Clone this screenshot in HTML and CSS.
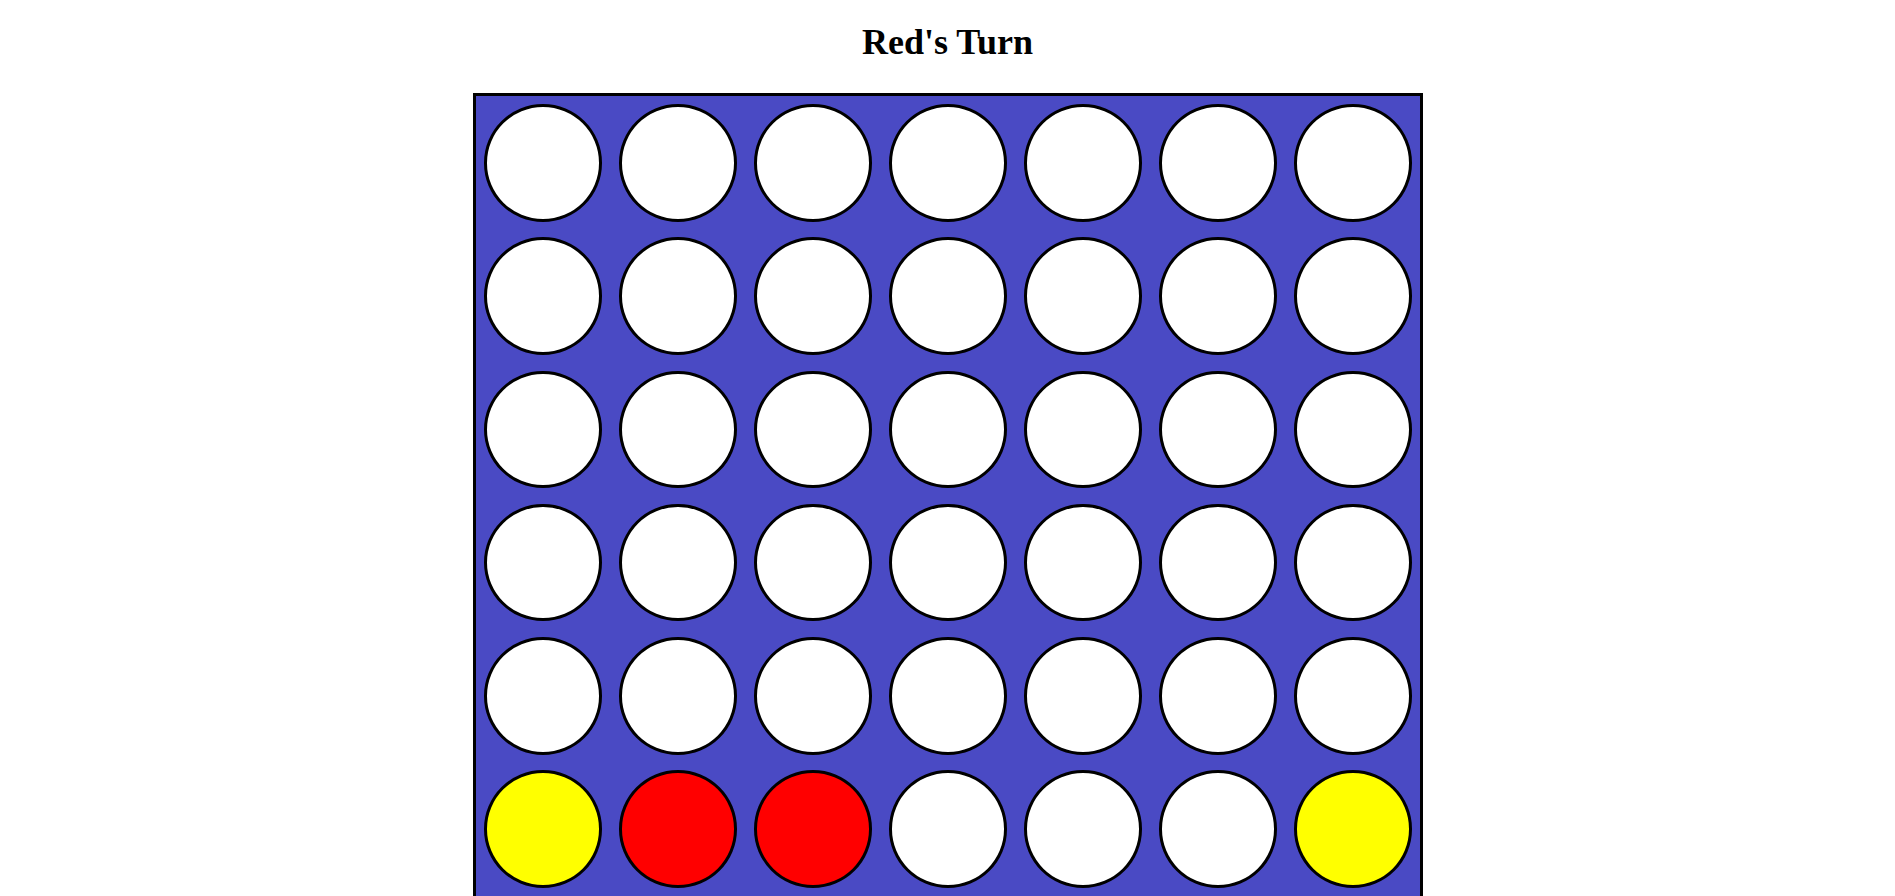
FILE: index.html
```html
<!DOCTYPE html>
<html>
<head>
<meta charset="utf-8">
<title>Connect Four</title>
<link rel="stylesheet" href="styles.css">
</head>
<body>
<div class="page">
  <h1 class="turn">Red's Turn</h1>
  <div class="board">
    <div class="slot"></div><div class="slot"></div><div class="slot"></div><div class="slot"></div><div class="slot"></div><div class="slot"></div><div class="slot"></div>
    <div class="slot"></div><div class="slot"></div><div class="slot"></div><div class="slot"></div><div class="slot"></div><div class="slot"></div><div class="slot"></div>
    <div class="slot"></div><div class="slot"></div><div class="slot"></div><div class="slot"></div><div class="slot"></div><div class="slot"></div><div class="slot"></div>
    <div class="slot"></div><div class="slot"></div><div class="slot"></div><div class="slot"></div><div class="slot"></div><div class="slot"></div><div class="slot"></div>
    <div class="slot"></div><div class="slot"></div><div class="slot"></div><div class="slot"></div><div class="slot"></div><div class="slot"></div><div class="slot"></div>
    <div class="slot yellow"></div><div class="slot red"></div><div class="slot red"></div><div class="slot"></div><div class="slot"></div><div class="slot"></div><div class="slot yellow"></div>
  </div>
</div>
</body>
</html>
```
FILE: styles.css
```css
html, body {
  margin: 0;
  padding: 0;
  background: #ffffff;
}
.page {
  display: flex;
  flex-direction: column;
  align-items: center;
  padding-top: 22px;
  font-family: "Liberation Serif", "Times New Roman", serif;
}
.turn {
  margin: 0 0 31px;
  font-size: 36px;
  line-height: 40px;
  font-weight: bold;
  color: #000;
}
.board {
  display: grid;
  grid-template-columns: repeat(7, 118px);
  grid-auto-rows: 117.5px;
  column-gap: 17px;
  row-gap: 15.8px;
  padding: 8px;
  background: #4a4ac4;
  border: 3px solid #000;
}
.slot {
  box-sizing: border-box;
  border: 3px solid #000;
  border-radius: 50%;
  background: #ffffff;
}
.slot.red {
  background: #ff0000;
}
.slot.yellow {
  background: #ffff00;
}
```
